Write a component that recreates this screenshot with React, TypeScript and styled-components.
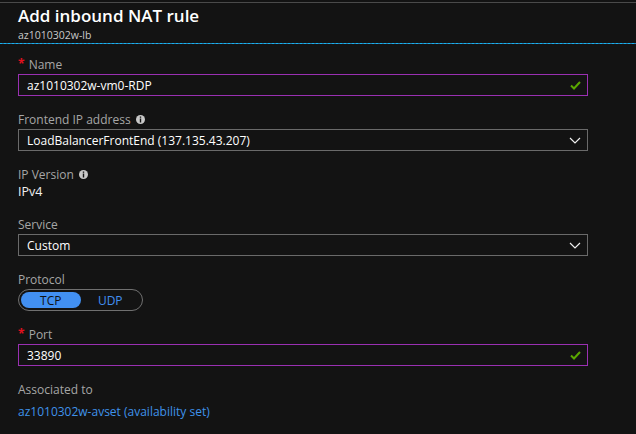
import React from "react";
import styled, { createGlobalStyle } from "styled-components";

const Global = createGlobalStyle`
  html, body { margin: 0; padding: 0; background: #131313; }
  body { font-family: "Open Sans", "Noto Sans", sans-serif; color: #fff; }
`;

const Page = styled.div`
  width: 636px;
  height: 434px;
  background: #131313;
  overflow: hidden;
  padding-top: 2px;
  box-sizing: border-box;
`;

const Header = styled.header`
  border-top: 1px solid #4a4a4a;
  padding: 3px 18px 0;
  height: 41px;
  box-sizing: border-box;
`;

const Title = styled.h1`
  margin: 0;
  font-size: 17px;
  font-weight: 600;
  line-height: 20px;
  color: #fff;
`;

const Subtitle = styled.div`
  margin-top: 2px;
  font-size: 10.5px;
  line-height: normal;
  color: #c8c8c8;
`;

const Divider = styled.div`
  height: 1px;
  background: repeating-linear-gradient(90deg, #12b4f2 0 2px, #2b84b8 2px 4px);
`;

const Form = styled.div`
  display: flex;
  flex-direction: column;
  padding: 12px 0 0 18px;
  width: 570px;
`;

const Field = styled.div<{ $gap?: number }>`
  display: flex;
  flex-direction: column;
  margin-bottom: ${(p) => p.$gap ?? 15}px;
`;

const Label = styled.div`
  display: flex;
  align-items: center;
  gap: 5px;
  height: 16px;
  font-size: 12px;
  color: #a6a6a6;
  margin-bottom: 2px;
`;

const Required = styled.span`
  color: #e3101e;
  font-size: 12px;
  font-weight: 700;
  margin-right: 1px;
  line-height: 12px;
  position: relative;
  top: -1px;
`;

const Box = styled.div<{ $valid?: boolean }>`
  display: flex;
  align-items: center;
  justify-content: space-between;
  height: 22px;
  box-sizing: border-box;
  border: 1px solid ${(p) => (p.$valid ? "#9a30b2" : "#6a6a6a")};
  padding: 0 6px 0 8px;
  font-size: 12px;
  color: #fff;
`;

const Value = styled.div`
  font-size: 12.5px;
  line-height: 16px;
  color: #f0f0f0;
`;

const Toggle = styled.div`
  display: flex;
  width: 125px;
  height: 22px;
  box-sizing: border-box;
  border: 1px solid #707070;
  border-radius: 11px;
  padding: 2px;
`;

const ToggleOption = styled.div<{ $active?: boolean }>`
  flex: 1;
  display: flex;
  align-items: center;
  justify-content: center;
  border-radius: 8px;
  font-size: 12px;
  background: ${(p) => (p.$active ? "#4290f2" : "transparent")};
  color: ${(p) => (p.$active ? "#111" : "#4290f2")};
`;

const Link = styled.a`
  font-size: 12px;
  line-height: 16px;
  color: #3f92ea;
  text-decoration: none;
  margin-top: 5px;
`;

const InfoIcon = () => (
  <svg width="9" height="9" viewBox="0 0 9 9">
    <circle cx="4.5" cy="4.5" r="4.5" fill="#c8c8c8" />
    <rect x="3.8" y="1.5" width="1.4" height="1.3" fill="#131313" />
    <rect x="3.8" y="3.5" width="1.4" height="4" fill="#131313" />
  </svg>
);

const Check = () => (
  <svg width="11" height="9" viewBox="0 0 11 9">
    <path d="M1 4.5 L4 7.5 L10 1" fill="none" stroke="#5aa700" strokeWidth="2" />
  </svg>
);

const Chevron = () => (
  <svg width="12" height="7" viewBox="0 0 12 7">
    <path d="M1 1 L6 6 L11 1" fill="none" stroke="#f0f0f0" strokeWidth="1.2" />
  </svg>
);

export default function App() {
  return (
    <Page>
      <Global />
      <Header>
        <Title>Add inbound NAT rule</Title>
        <Subtitle>az1010302w-lb</Subtitle>
      </Header>
      <Divider />
      <Form>
        <Field>
          <Label>
            <span>
              <Required>*</Required> Name
            </span>
          </Label>
          <Box $valid>
            <span>az1010302w-vm0-RDP</span>
            <Check />
          </Box>
        </Field>
        <Field>
          <Label>
            Frontend IP address <InfoIcon />
          </Label>
          <Box>
            <span>LoadBalancerFrontEnd (137.135.43.207)</span>
            <Chevron />
          </Box>
        </Field>
        <Field $gap={16}>
          <Label>
            IP Version <InfoIcon />
          </Label>
          <Value>IPv4</Value>
        </Field>
        <Field>
          <Label>Service</Label>
          <Box>
            <span>Custom</span>
            <Chevron />
          </Box>
        </Field>
        <Field>
          <Label>Protocol</Label>
          <Toggle>
            <ToggleOption $active>TCP</ToggleOption>
            <ToggleOption>UDP</ToggleOption>
          </Toggle>
        </Field>
        <Field>
          <Label>
            <span>
              <Required>*</Required> Port
            </span>
          </Label>
          <Box $valid>
            <span>33890</span>
            <Check />
          </Box>
        </Field>
        <Field>
          <Label>Associated to</Label>
          <Link href="#">az1010302w-avset (availability set)</Link>
        </Field>
      </Form>
    </Page>
  );
}
